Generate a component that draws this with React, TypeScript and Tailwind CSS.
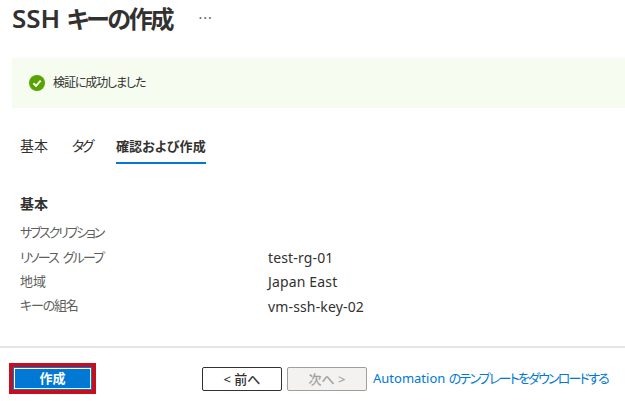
const font = "font-['Noto_Sans','Noto_Sans_CJK_JP',sans-serif] [font-feature-settings:'palt']";

const rows = [
  { label: 'サブスクリプション', value: '', track: 'tracking-[-2.2px]' },
  { label: 'リソース\u2002グループ', value: 'test-rg-01', track: 'tracking-[-1.8px]' },
  { label: '地域', value: 'Japan East', track: '' },
  { label: 'キーの組名', value: 'vm-ssh-key-02', track: 'tracking-[-1.2px]' },
];

export default function App() {
  return (
    <div className={`${font} flex h-[401px] w-[625px] flex-col overflow-hidden bg-white text-[#323130]`}>
      {/* Title */}
      <div className="flex h-[36px] items-center pl-3">
        <h1 className="text-[24px] leading-[36px] font-semibold">
          <span className="text-[26px]">SSH</span> <span className="tracking-[-2.2px]">キーの作成</span>
        </h1>
        <span className="ml-[26px] text-[14px] leading-none tracking-[1px] text-[#605e5c]">···</span>
      </div>

      {/* Validation banner */}
      <div className="mt-[22px] ml-3 flex h-[50px] items-center gap-2 bg-[#f6fdf0] pl-[17px]">
        <svg width="16" height="16" viewBox="0 0 16 16">
          <circle cx="8" cy="8" r="8" fill="#57a300" />
          <path d="M4.4 8.3 7 10.8 11.7 5.6" fill="none" stroke="#fff" strokeWidth="2" />
        </svg>
        <span className="text-[12px] tracking-[-1.1px]">検証に成功しました</span>
      </div>

      {/* Tabs */}
      <div className="mt-[21px] ml-5 flex h-[35px] gap-6 text-[14px]">
        <div className="leading-[34px]">基本</div>
        <div className="leading-[34px] tracking-[-2.5px]">タグ</div>
        <div className="border-b-2 border-[#0078d4] text-[13px] leading-[34px] font-bold tracking-[0.15px]">
          確認および作成
        </div>
      </div>

      {/* Summary */}
      <div className="mt-[30px] ml-5">
        <h2 className="text-[14px] leading-[20px] font-bold">基本</h2>
        <div className="mt-[7px] flex flex-col">
          {rows.map((r) => (
            <div key={r.label} className="flex h-[24.3px] items-center text-[13px]">
              <div className={`w-[248px] text-[#605e5c] ${r.track}`}>{r.label}</div>
              <div className="text-[14px] tracking-[0.15px]">{r.value}</div>
            </div>
          ))}
        </div>
      </div>

      {/* Footer */}
      <div className="mt-[28px] flex h-[54px] items-start border-t-2 border-[#e5e5e5] pt-[15px] pl-[9px]">
        <div className="border-[5px] border-[#c50f1f]">
          <button className="block h-[21px] w-[77px] border border-white bg-[#0078d4] text-[13px] leading-[19px] font-bold text-white outline outline-[#0078d4]">
            作成
          </button>
        </div>
        <div className="mt-[4px] ml-[106px] flex items-center gap-[5px]">
          <button className="h-[24px] w-[80px] rounded-[2px] border border-[#323130] text-[13px] leading-[22px] font-medium">
            &lt; 前へ
          </button>
          <button className="h-[24px] w-[80px] rounded-[2px] border border-[#a19f9d] bg-[#f3f2f1] text-[13px] leading-[22px] font-medium text-[#a19f9d]">
            次へ &gt;
          </button>
          <span className="ml-px text-[13px] whitespace-nowrap text-[#0078d4]">
            Automation <span className="tracking-[-1.8px]">のテンプレートをダウンロードする</span>
          </span>
        </div>
      </div>
    </div>
  );
}
